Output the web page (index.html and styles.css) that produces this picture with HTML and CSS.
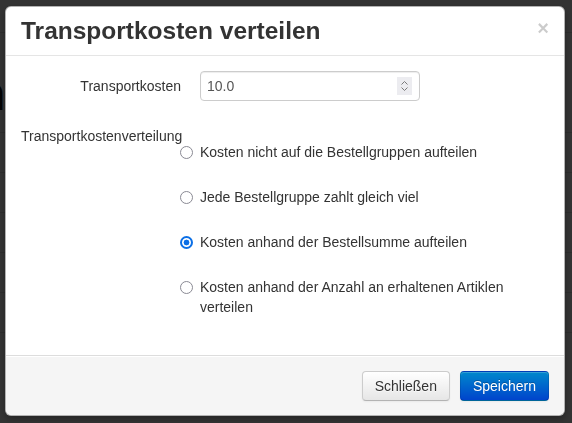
FILE: index.html
```html
<!DOCTYPE html>
<html lang="de">
<head>
<meta charset="utf-8">
<title>Transportkosten verteilen</title>
<link rel="stylesheet" href="styles.css">
</head>
<body>
<div class="page">
  <div class="topbar"></div>
  <div class="heading">n</div>
  <div class="rows">
    <div class="row"></div>
    <div class="row"></div>
    <div class="row"></div>
    <div class="row"></div>
    <div class="row"></div>
    <div class="row"></div>
  </div>
</div>
<div class="backdrop"></div>
<div class="modal">
  <div class="modal-header">
    <h3 class="modal-title">Transportkosten verteilen</h3>
    <span class="close">×</span>
  </div>
  <div class="modal-body">
    <div class="group">
      <label class="control-label">Transportkosten</label>
      <div class="controls">
        <div class="number-input">
          <input class="number-field" type="text" value="10.0">
          <span class="spin">
            <svg width="15" height="18" viewBox="0 0 15 18"><path d="M4.5 7.5 L7.5 4.5 L10.5 7.5" fill="none" stroke="#7a7a7a" stroke-width="1"/><path d="M4.5 10.5 L7.5 13.5 L10.5 10.5" fill="none" stroke="#7a7a7a" stroke-width="1"/></svg>
          </span>
        </div>
      </div>
    </div>
    <div class="group group-radios">
      <div class="radios-label">Transportkostenverteilung</div>
      <div class="radios">
        <label class="radio"><input type="radio" name="v"><span>Kosten nicht auf die Bestellgruppen aufteilen</span></label>
        <label class="radio"><input type="radio" name="v"><span>Jede Bestellgruppe zahlt gleich viel</span></label>
        <label class="radio"><input type="radio" name="v" checked><span>Kosten anhand der Bestellsumme aufteilen</span></label>
        <label class="radio"><input type="radio" name="v"><span>Kosten anhand der Anzahl an erhaltenen Artiklen verteilen</span></label>
      </div>
    </div>
  </div>
  <div class="modal-footer">
    <button class="btn">Schließen</button>
    <button class="btn btn-primary">Speichern</button>
  </div>
</div>
</body>
</html>
```

FILE: styles.css
```css
html, body {
  margin: 0;
  padding: 0;
}
body {
  width: 572px;
  height: 423px;
  overflow: hidden;
  font-family: "Liberation Sans", Arial, sans-serif;
  background: #fff;
}
.page {
  height: 423px;
  background: #fff;
  overflow: hidden;
}
.topbar {
  height: 32px;
  border-bottom: 1px solid #ddd;
}
.heading {
  margin-top: 36px;
  margin-left: -24px;
  font-size: 48px;
  line-height: 50px;
  font-weight: bold;
  color: #111;
}
.rows {
  margin-top: 13px;
}
.row {
  height: 39px;
  border-top: 1px solid #ddd;
}
.backdrop {
  position: fixed;
  inset: 0;
  background: rgba(0, 0, 0, 0.8);
}
.modal {
  position: fixed;
  top: 6px;
  left: 5px;
  width: 560px;
  box-sizing: border-box;
  background: #fff;
  border: 1px solid rgba(0, 0, 0, 0.3);
  border-radius: 6px;
  box-shadow: 0 3px 7px rgba(0, 0, 0, 0.3);
  color: #333;
  font-size: 14px;
  line-height: 20px;
}
.modal-header {
  display: flex;
  justify-content: space-between;
  align-items: flex-start;
  padding: 9px 15px;
  border-bottom: 1px solid #e5e5e5;
}
.modal-title {
  margin: 0;
  font-size: 24.5px;
  line-height: 30px;
  font-weight: bold;
  color: #333;
}
.close {
  font-size: 20px;
  font-weight: bold;
  line-height: 20px;
  color: #000;
  opacity: 0.2;
  margin-top: 2px;
}
.modal-body {
  padding: 15px;
}
.group {
  display: flex;
  align-items: flex-start;
}
.control-label {
  width: 160px;
  text-align: right;
  padding-top: 5px;
  line-height: 20px;
}
.controls {
  margin-left: 19px;
}
.number-input {
  display: flex;
  align-items: center;
  width: 220px;
  height: 30px;
  box-sizing: border-box;
  border: 1px solid #ccc;
  border-radius: 4px;
  box-shadow: inset 0 1px 1px rgba(0, 0, 0, 0.075);
  padding: 0 7px 0 6px;
}
.number-field {
  flex: 1;
  min-width: 0;
  border: 0;
  outline: 0;
  padding: 0;
  margin: 0;
  font-family: "Liberation Sans", Arial, sans-serif;
  font-size: 14px;
  color: #555;
  background: transparent;
}
.spin {
  display: block;
  width: 15px;
  height: 18px;
  background: #ececf0;
}
.spin svg {
  display: block;
}
.group-radios {
  display: block;
  margin-top: 20px;
  margin-bottom: 23px;
}
.radios-label {
  padding-top: 9px;
  line-height: 12px;
  white-space: nowrap;
}
.radios {
  margin-left: 159px;
  display: flex;
  flex-direction: column;
  gap: 25px;
}
.radio {
  display: flex;
  align-items: flex-start;
  line-height: 20px;
}
.radio input {
  appearance: none;
  -webkit-appearance: none;
  box-sizing: border-box;
  width: 13px;
  height: 13px;
  margin: 4px 7px 0 0;
  flex: none;
  border: 1.8px solid #8a8a94;
  border-radius: 50%;
  background: #fff;
}
.radio input:checked {
  border: 2px solid #0b6fe6;
  background: radial-gradient(circle, #0b6fe6 0 2.6px, #fff 3.2px);
}
.modal-footer {
  display: flex;
  justify-content: flex-end;
  gap: 10px;
  padding: 15px 15px 14px;
  background: #f5f5f5;
  border-top: 1px solid #ddd;
  box-shadow: inset 0 1px 0 #fff;
  border-radius: 0 0 6px 6px;
}
.btn {
  height: 30px;
  box-sizing: border-box;
  padding: 4px 12px;
  font-family: "Liberation Sans", Arial, sans-serif;
  font-size: 14px;
  line-height: 20px;
  color: #333;
  text-shadow: 0 1px 1px rgba(255, 255, 255, 0.75);
  background: linear-gradient(to bottom, #ffffff, #e6e6e6);
  border: 1px solid #ccc;
  border-bottom-color: #b3b3b3;
  border-radius: 4px;
  box-shadow: inset 0 1px 0 rgba(255, 255, 255, 0.2), 0 1px 2px rgba(0, 0, 0, 0.05);
}
.btn-primary {
  color: #fff;
  text-shadow: 0 -1px 0 rgba(0, 0, 0, 0.25);
  background: linear-gradient(to bottom, #0088cc, #0044cc);
  border-color: rgba(0, 0, 0, 0.1) rgba(0, 0, 0, 0.1) rgba(0, 0, 0, 0.25);
}
```
